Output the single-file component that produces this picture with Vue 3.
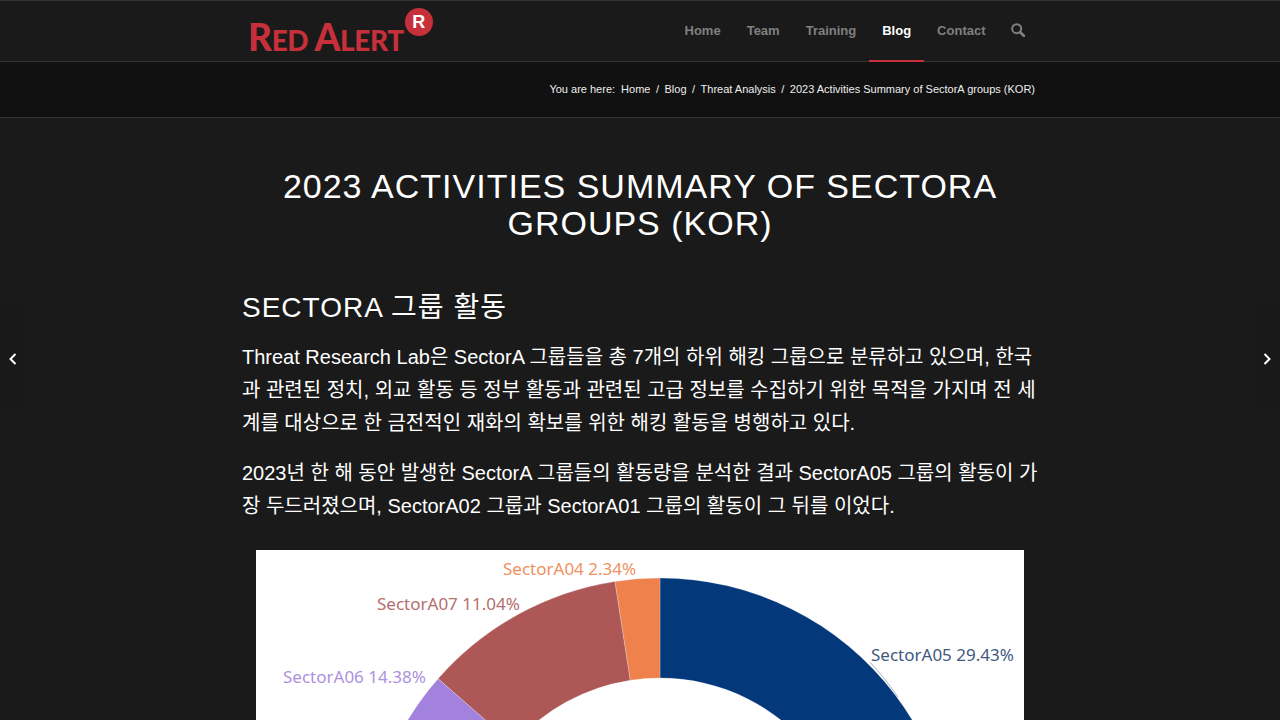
<script setup>
const navItems = ['Home', 'Team', 'Training', 'Blog', 'Contact']

const crumbs = ['Home', 'Blog', 'Threat Analysis', '2023 Activities Summary of SectorA groups (KOR)']

const center = { x: 404, y: 323 }

const point = (radius, deg) => {
  const rad = (deg * Math.PI) / 180
  return `${(center.x + radius * Math.sin(rad)).toFixed(2)} ${(center.y - radius * Math.cos(rad)).toFixed(2)}`
}

const slice = (from, to) => {
  const large = to - from > 180 ? 1 : 0
  return `M${point(295, from)} A295 295 0 ${large} 1 ${point(295, to)} L${point(195, to)} A195 195 0 ${large} 0 ${point(195, from)} Z`
}

const slices = [
  { color: '#03387a', d: slice(0, 105.9) },
  { color: '#ee814c', d: slice(-8.8, 0) },
  { color: '#ad5757', d: slice(-48.8, -8.8) },
  { color: '#a382dd', d: slice(-100, -48.8) },
]

const labels = [
  { text: 'SectorA04 2.34%', x: 247, y: 25, color: '#f0915f' },
  { text: 'SectorA07 11.04%', x: 121, y: 60, color: '#b56e6e' },
  { text: 'SectorA06 14.38%', x: 27, y: 133, color: '#ab92e0' },
  { text: 'SectorA05 29.43%', x: 615, y: 111, color: '#41597f' },
]
</script>

<template>
  <div class="page">
    <header class="top_bar">
      <div class="wrap top_inner">
        <a class="logo">
          <span class="logo_text"><span class="big">R</span>ED <span class="big">A</span>LERT</span>
          <span class="logo_badge">R</span>
        </a>
        <nav class="nav">
          <a v-for="item in navItems" :key="item" class="nav_item" :class="{ active: item === 'Blog' }">{{ item }}</a>
          <a class="nav_item search">
            <svg width="14" height="14" viewBox="0 0 14 14">
              <circle cx="5.7" cy="5.7" r="4.5" fill="none" stroke="#808080" stroke-width="2" />
              <path d="M9 9l4 4" stroke="#808080" stroke-width="2.6" stroke-linecap="round" />
            </svg>
          </a>
        </nav>
      </div>
    </header>

    <div class="crumb_bar">
      <div class="wrap crumb_inner">
        <span class="crumb_lead">You are here:</span>
        <template v-for="(crumb, i) in crumbs" :key="crumb">
          <span v-if="i > 0" class="crumb_sep">/</span>
          <a class="crumb">{{ crumb }}</a>
        </template>
      </div>
    </div>

    <main class="article">
      <h1 class="title">2023 Activities Summary of SectorA groups (KOR)</h1>
      <h2 class="section">SectorA 그룹 활동</h2>
      <p class="para">Threat Research Lab은 SectorA 그룹들을 총 7개의 하위 해킹 그룹으로 분류하고 있으며, 한국과 관련된 정치, 외교 활동 등 정부 활동과 관련된 고급 정보를 수집하기 위한 목적을 가지며 전 세계를 대상으로 한 금전적인 재화의 확보를 위한 해킹 활동을 병행하고 있다.</p>
      <p class="para">2023년 한 해 동안 발생한 SectorA 그룹들의 활동량을 분석한 결과 SectorA05 그룹의 활동이 가장 두드러졌으며, SectorA02 그룹과 SectorA01 그룹의 활동이 그 뒤를 이었다.</p>
      <div class="chart">
        <svg width="768" height="620" viewBox="0 0 768 620">
          <rect width="768" height="620" fill="#fff" />
          <path v-for="s in slices" :key="s.color" :d="s.d" :fill="s.color" stroke="#fff" stroke-opacity="0.4" stroke-width="0.6" />
          <path d="M614 112Q629 128 642 147" fill="none" stroke="#aab6c8" stroke-width="1" />
          <text v-for="l in labels" :key="l.text" :x="l.x" :y="l.y" :fill="l.color" class="chart_label">{{ l.text }}</text>
        </svg>
      </div>
    </main>

    <a class="side_tab left">
      <svg width="10" height="14" viewBox="0 0 10 14"><path d="M7.5 2L2.5 7l5 5" fill="none" stroke="#fff" stroke-width="2" /></svg>
    </a>
    <a class="side_tab right">
      <svg width="10" height="14" viewBox="0 0 10 14"><path d="M2.5 2l5 5-5 5" fill="none" stroke="#fff" stroke-width="2" /></svg>
    </a>
  </div>
</template>

<style>
html, body {
  margin: 0;
  background: #1a1a1a;
  overflow: hidden;
}
</style>

<style scoped>
.page {
  position: relative;
  height: 720px;
  overflow: hidden;
  background: #1a1a1a;
  font-family: "Liberation Sans", "Noto Sans CJK KR", sans-serif;
  color: #fff;
}

.wrap {
  width: 800px;
  margin: 0 auto;
}

.top_bar {
  height: 60px;
  border-top: 1px solid #333;
  border-bottom: 1px solid #333;
  background: #1a1a1a;
}

.top_inner {
  display: flex;
  justify-content: space-between;
  height: 100%;
}

.logo {
  display: flex;
  align-items: flex-start;
  padding-left: 8px;
}

.logo_text {
  margin-top: 17px;
  font-family: Lato, sans-serif;
  font-weight: 900;
  font-size: 28px;
  line-height: 38px;
  letter-spacing: -0.4px;
  color: #c5303a;
  white-space: nowrap;
}

.big {
  font-size: 37px;
}

.logo_badge {
  width: 28px;
  height: 28px;
  border-radius: 50%;
  margin: 7px 0 0 1px;
  background: #c5303a;
  color: #fff;
  font-family: "Liberation Sans", sans-serif;
  font-weight: 700;
  font-size: 18px;
  line-height: 28px;
  text-align: center;
}

.nav {
  display: flex;
  margin-right: 1.5px;
}

.nav_item {
  position: relative;
  display: flex;
  align-items: center;
  box-sizing: border-box;
  height: 60px;
  padding: 0 13px 2px;
  font-size: 13px;
  font-weight: 700;
  color: #808080;
}

.nav_item.active {
  color: #fff;
}

.nav_item.active::after {
  content: '';
  position: absolute;
  left: 0;
  right: 0;
  bottom: -1px;
  height: 2px;
  background: #c5303a;
}

.search {
  padding-left: 12px;
  padding-right: 14px;
}

.crumb_bar {
  height: 55px;
  border-bottom: 1px solid #333;
  background: #111;
}

.crumb_inner {
  display: flex;
  justify-content: flex-end;
  align-items: center;
  box-sizing: border-box;
  height: 100%;
  padding: 0 5px 2px 0;
  font-size: 11px;
  color: #eee;
}

.crumb_lead {
  margin-right: 6px;
}

.crumb_sep {
  margin: 0 5.5px;
}

.article {
  width: 796px;
  margin-left: 242px;
}

.title {
  margin: 50px 0 0;
  font-size: 34px;
  font-weight: 400;
  line-height: 37px;
  letter-spacing: 1px;
  text-align: center;
  text-transform: uppercase;
}

.section {
  margin: 46px 0 0;
  font-size: 28px;
  font-weight: 400;
  line-height: 40px;
  letter-spacing: 1px;
  text-transform: uppercase;
}

.para {
  margin: 13px 0 0;
  font-size: 20px;
  line-height: 33px;
}

.para + .para {
  margin-top: 17px;
}

.chart {
  margin: 27px 0 0 14px;
  line-height: 0;
}

.chart_label {
  font-family: "Noto Sans", sans-serif;
  font-size: 17px;
}

.side_tab {
  position: absolute;
  top: 305px;
  display: flex;
  align-items: center;
  justify-content: center;
  box-sizing: border-box;
  width: 30px;
  height: 108px;
  background: #191919;
}

.side_tab.left {
  left: 0;
  padding-right: 4px;
}

.side_tab.right {
  right: 0;
  padding-left: 4px;
}
</style>
